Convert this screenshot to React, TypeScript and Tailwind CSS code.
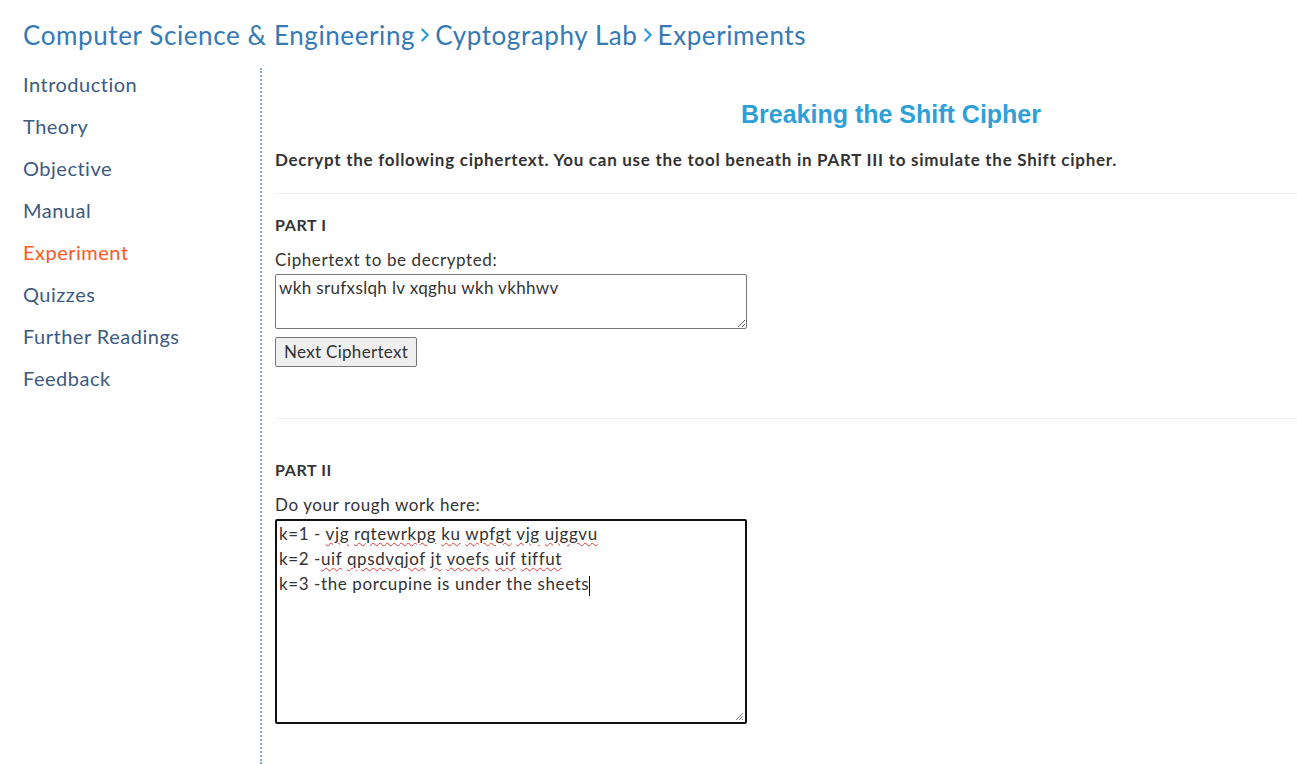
import { ChevronRight } from 'lucide-react';

const NAV = [
  'Introduction',
  'Theory',
  'Objective',
  'Manual',
  'Experiment',
  'Quizzes',
  'Further Readings',
  'Feedback',
];

const CRUMBS = ['Computer Science & Engineering', 'Cyptography Lab', 'Experiments'];

function Squiggle({ children }: { children: React.ReactNode }) {
  return (
    <span className="underline decoration-wavy decoration-[#e53935] decoration-1 underline-offset-2">
      {children}
    </span>
  );
}

export default function App() {
  const font = { fontFamily: 'Lato, "Open Sans", sans-serif' };

  return (
    <div className="min-h-[764px] bg-white text-[#333]" style={font}>
      {/* Breadcrumb */}
      <div className="flex items-center pl-[23px] pt-[17px] h-[52px] text-[26px] tracking-[0.6px] text-[#337ab7] leading-none">
        {CRUMBS.map((c, i) => (
          <span key={c} className="flex items-center">
            {i > 0 && <ChevronRight className="w-[22px] h-[22px] text-[#2f9fd8] mx-[-1px]" strokeWidth={2.5} />}
            <span>{c}</span>
          </span>
        ))}
      </div>

      <div className="flex">
        {/* Sidebar */}
        <nav className="w-[260px] pl-[23px] pt-[19px] shrink-0">
          {NAV.map((n) => (
            <div
              key={n}
              className={`h-[42px] text-[20px] leading-[26px] tracking-[0.5px] ${
                n === 'Experiment' ? 'text-[#ff5722]' : 'text-[#3d5a80]'
              }`}
            >
              {n}
            </div>
          ))}
        </nav>

        <div className="w-0 border-l-2 border-dotted border-[#8fa8c8] mt-[16px] min-h-[696px]" />

        {/* Content */}
        <main className="flex-1 pl-[13px] pt-[44px]">
          <h1
            className="text-center text-[25px] font-bold text-[#2f9fd8] pl-[210px] leading-[36px]"
            style={{ fontFamily: '"Liberation Sans", Arial, sans-serif' }}
          >
            Breaking the Shift Cipher
          </h1>
          <p className="mt-[16px] text-[17px] font-bold text-[#333] leading-[24px] tracking-[0.72px]">
            Decrypt the following ciphertext. You can use the tool beneath in PART III to simulate the Shift cipher.
          </p>
          <hr className="mt-[21px] border-t border-[#eee]" />

          <div className="mt-[20px] text-[16px] font-bold leading-[22px] tracking-[0.6px]">PART I</div>
          <div className="mt-[12px] text-[17px] leading-[24px] text-[#333] tracking-[0.6px]">
            Ciphertext to be decrypted:
          </div>
          <textarea
            readOnly
            defaultValue="wkh srufxslqh lv xqghu wkh vkhhwv"
            className="block w-[472px] h-[55px] mt-[2px] border border-[#767676] rounded-[2px] px-[3px] py-0 text-[17px] leading-[25px] text-[#333] tracking-[0.35px] resize"
            style={font}
          />
          <button
            className="mt-[8px] h-[30px] px-[8px] text-[17px] text-[#333] tracking-[0.3px] bg-[#efefef] border border-[#767676] rounded-[2px]"
            style={font}
          >
            Next Ciphertext
          </button>

          <hr className="mt-[51px] border-t border-[#eee]" />

          <div className="mt-[40px] text-[16px] font-bold leading-[22px] tracking-[0.6px]">PART II</div>
          <div className="mt-[12px] text-[17px] leading-[24px] text-[#333] tracking-[0.6px]">
            Do your rough work here:
          </div>
          <div className="w-[472px] h-[205px] mt-[2px] border-2 border-[#111] rounded-[2px] px-[2px] py-0 text-[17px] leading-[25px] text-[#333] tracking-[0.6px] relative">
            <div>
              k=1 - <Squiggle>vjg</Squiggle> <Squiggle>rqtewrkpg</Squiggle> <Squiggle>ku</Squiggle>{' '}
              <Squiggle>wpfgt</Squiggle> <Squiggle>vjg</Squiggle> <Squiggle>ujggvu</Squiggle>
            </div>
            <div>
              k=2 -<Squiggle>uif</Squiggle> <Squiggle>qpsdvqjof</Squiggle> <Squiggle>jt</Squiggle>{' '}
              <Squiggle>voefs</Squiggle> <Squiggle>uif</Squiggle> <Squiggle>tiffut</Squiggle>
            </div>
            <div>
              k=3 -the porcupine is under the sheets
              <span className="inline-block w-px h-[20px] bg-[#111] align-middle" />
            </div>
            <svg className="absolute right-[1px] bottom-[1px]" width="9" height="9" viewBox="0 0 9 9">
              <path d="M8 1L1 8M8 4L4 8M8 7L7 8" stroke="#888" strokeWidth="1" />
            </svg>
          </div>
        </main>
      </div>
    </div>
  );
}
